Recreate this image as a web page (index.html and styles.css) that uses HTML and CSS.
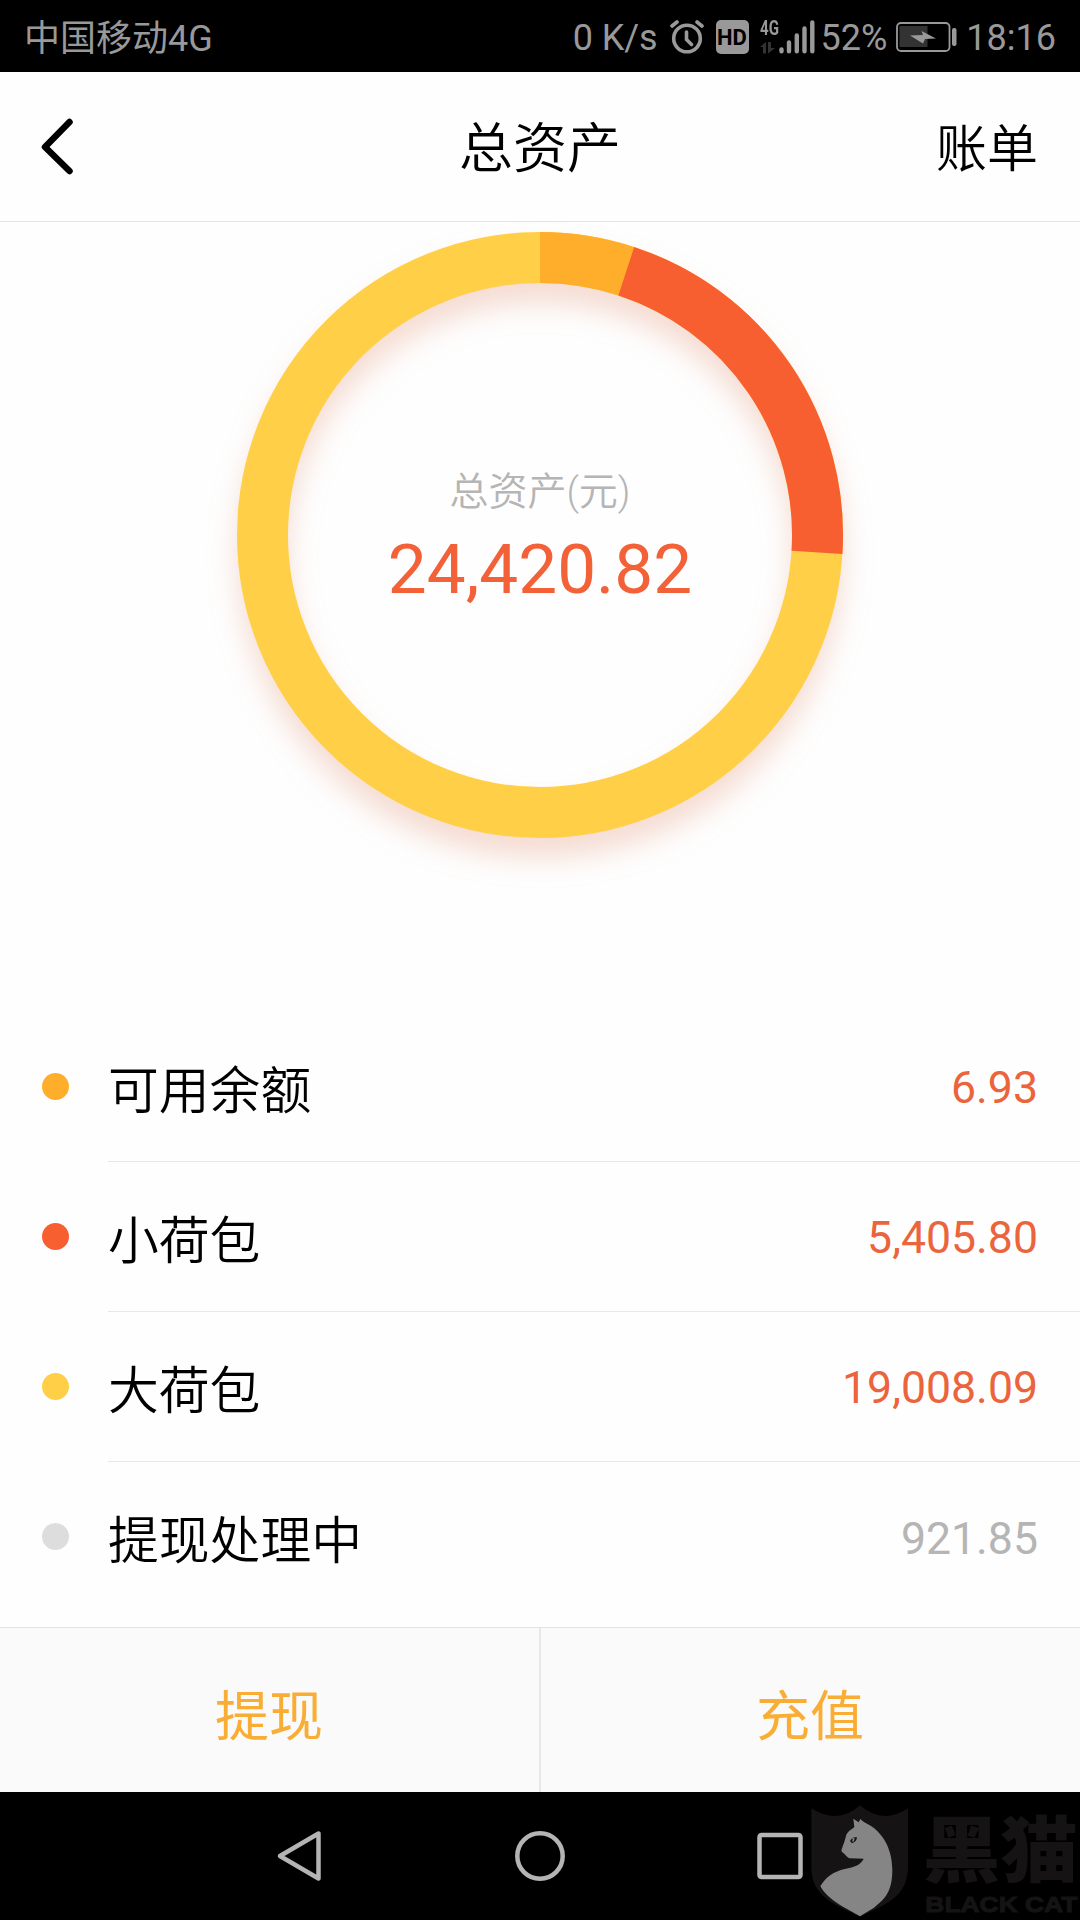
FILE: index.html
```html
<!DOCTYPE html>
<html lang="zh-CN">
<head>
<meta charset="utf-8">
<title>总资产</title>
<link rel="stylesheet" href="styles.css">
</head>
<body>
<div class="screen">
  <div class="status">
    <span class="carrier">中国移动4G</span>
    <span class="speed">0 K/s</span>
    <svg class="alarm" width="34" height="34" viewBox="0 0 34 34" fill="none" stroke="#999" stroke-linecap="round">
      <circle cx="17" cy="18.500" r="13.300" stroke-width="3.600"/>
      <path d="M2 6L7 2M32 6L27 2" stroke-width="3.600"/>
      <path d="M16.500 12v7.500l5 5" stroke-width="3.600"/>
    </svg>
    <span class="hd">HD</span>
    <span class="network">
      <span class="gen">4G</span>
      <svg width="16" height="12" viewBox="0 0 16 12">
        <path d="M0 5L6 0V11.500H3V5ZM8 0H11V6H15L8 11.500Z" fill="#333"/>
      </svg>
    </span>
    <svg class="signal" width="36" height="34" viewBox="0 0 36 34" stroke="#999" stroke-width="4.400" stroke-linecap="round">
      <path d="M2.500 29.500v1.700M10 22.500v8.700M17.800 15.500v15.700M25.500 8.500v22.700M33.300 2.500v28.700"/>
    </svg>
    <span class="percent">52%</span>
    <svg class="battery" width="62" height="30" viewBox="0 0 62 30">
      <rect x="1" y="1" width="52.500" height="28" rx="4" fill="none" stroke="#999" stroke-width="1.800"/>
      <rect x="3.500" y="4" width="28" height="21" fill="#333"/>
      <path d="M14 13.500L27 13L25.500 9L40 16.500L29 17L27 21.500Z" fill="#999"/>
      <rect x="56" y="6" width="4.500" height="18" rx="2" fill="#999"/>
    </svg>
    <span class="clock">18:16</span>
  </div>

  <header class="header">
    <svg class="back" width="34" height="60" viewBox="0 0 34 60" fill="none" stroke="#000" stroke-width="6.500" stroke-linecap="round" stroke-linejoin="round">
      <path d="M29.500 6L5 31L29.500 55"/>
    </svg>
    <h1 class="title">总资产</h1>
    <a class="bill">账单</a>
  </header>

  <section class="chart">
    <svg class="ring" width="606" height="606" viewBox="-303 -303 606 606" fill="none" stroke-width="51">
      <circle r="277.500" stroke="#ffd047"/>
      <path d="M0 -277.500A277.500 277.500 0 0 1 86.200 -263.800" stroke="#ffae2c"/>
      <path d="M86.200 -263.800A277.500 277.500 0 0 1 277 17.400" stroke="#f85f30"/>
    </svg>
    <div class="total">
      <div class="total-label">总资产(元)</div>
      <div class="total-value">24,420.82</div>
    </div>
  </section>

  <ul class="list">
    <li class="row"><i class="dot balance"></i><div class="cell"><span class="name">可用余额</span><b class="amount">6.93</b></div></li>
    <li class="row"><i class="dot small"></i><div class="cell"><span class="name">小荷包</span><b class="amount">5,405.80</b></div></li>
    <li class="row"><i class="dot large"></i><div class="cell"><span class="name">大荷包</span><b class="amount">19,008.09</b></div></li>
    <li class="row"><i class="dot pending"></i><div class="cell"><span class="name">提现处理中</span><b class="amount muted">921.85</b></div></li>
  </ul>

  <div class="actions">
    <a class="action">提现</a>
    <a class="action">充值</a>
  </div>

  <nav class="nav">
    <svg width="50" height="54" viewBox="0 0 50 54"><path d="M5 27L43.500 4.500V49.500Z"/></svg>
    <svg width="54" height="54" viewBox="0 0 54 54"><circle cx="27" cy="27" r="22.700"/></svg>
    <svg width="50" height="54" viewBox="0 0 50 54"><rect x="4.500" y="6" width="41" height="42" rx="2"/></svg>
  </nav>

  <svg class="watermark" width="290" height="130" viewBox="0 0 870 390">
    <path d="M64 55Q145 105 210 46Q278 105 354 55V232C354 320 285 345 210 380C135 345 64 320 64 232Z" fill="#151314"/>
    <path d="M190 86L206 97L211 87C219 95 226 99 238 105C285 133 307 185 307 240C307 310 280 330 252 353L210 379L167 355C135 337 105 315 91 289C107 260 132 245 164 237C194 231 213 224 221 206L178 205C171 202 166 193 156 186C152 178 158 174 158 169C163 158 166 145 169 134C176 121 187 117 193 111Z" fill="#858585"/>
    <path d="M180 153Q187 139 201 142Q200 155 186 160Z" fill="#151314"/>
    <path d="M188 144l6 1-3 10-4 0z" fill="#858585"/>
    <text class="mark-cn" x="398" y="257" textLength="466" lengthAdjust="spacingAndGlyphs">黑猫</text>
    <text class="mark-en" x="406" y="366" textLength="456" lengthAdjust="spacingAndGlyphs">BLACK CAT</text>
  </svg>
</div>
</body>
</html>
```
FILE: styles.css
```css
* { box-sizing: border-box; margin: 0; padding: 0; }

body {
  background: #fff;
  color: #000;
  font-family: Roboto, "Noto Sans CJK SC", sans-serif;
  font-weight: 400;
}

.screen {
  position: relative;
  display: flex;
  flex-direction: column;
  width: 1080px;
  height: 1920px;
  overflow: hidden;
  background: #fefefe;
}

.status {
  display: flex;
  align-items: center;
  height: 72px;
  padding: 2px 24px 0;
  background: #000;
  color: #999;
  font-size: 36px;
  line-height: 42px;
  white-space: nowrap;
}
.carrier { margin-right: auto; padding-top: 3px; }
.speed, .percent, .clock { padding-top: 2px; }
.speed { letter-spacing: -.1px; }
.alarm { margin-left: 12px; }
.hd {
  width: 33px;
  height: 34px;
  margin-left: 12px;
  border-radius: 5px;
  background: #999;
  color: #000;
  font-size: 22px;
  font-weight: 700;
  line-height: 35px;
  text-align: center;
}
.network {
  display: flex;
  flex-direction: column;
  justify-content: space-between;
  width: 19px;
  height: 34px;
  margin-left: 11px;
}
.gen {
  font-size: 21px;
  font-weight: 700;
  line-height: 16px;
  transform: scaleX(.72);
  transform-origin: left;
}
.percent { margin-left: 6px; }
.battery { margin-left: 9px; }
.clock { margin-left: 8px; }

.header {
  display: grid;
  grid-template-columns: 1fr auto 1fr;
  align-items: center;
  height: 150px;
  padding: 0 42px 2px 40px;
  border-bottom: 1px solid #e4e4e4;
}
.title { font-size: 54px; font-weight: 350; line-height: 64px; padding: 8px 0 0 2px; }
.bill { justify-self: end; font-size: 51px; font-weight: 350; line-height: 60px; padding-top: 8px; }

.chart {
  display: grid;
  justify-items: center;
  height: 790px;
  padding-top: 10px;
}
.ring {
  grid-area: 1 / 1;
  overflow: visible;
  filter: drop-shadow(0 20px 14px rgba(220, 125, 85, .26));
}
.total { grid-area: 1 / 1; padding-top: 234px; text-align: center; }
.total-label { color: #b5b5b5; font-size: 39px; font-weight: 350; line-height: 52px; }
.total-value { color: #f26138; font-size: 69.300px; line-height: 82px; margin-top: 11px; }

.list { list-style: none; height: 615px; }
.row {
  display: flex;
  align-items: center;
  height: 150px;
  padding-left: 41.500px;
}
.dot { width: 27px; height: 27px; margin-bottom: 2px; border-radius: 50%; }
.balance { background: #ffae2c; }
.small { background: #f85f30; }
.large { background: #ffd047; }
.pending { background: #ddd; }
.cell {
  flex: 1;
  display: flex;
  align-items: center;
  justify-content: space-between;
  height: 150px;
  margin-left: 39.500px;
  padding-right: 42px;
  border-bottom: 1px solid #e8e8e8;
  font-size: 50.800px;
}
.name { font-weight: 350; }
.row:last-child .cell { border-bottom: 0; }
.amount { padding-top: 3px; color: #eb643c; font-size: 44.600px; font-weight: 400; }
.muted { color: #b5b5b5; }

.actions {
  display: flex;
  height: 165px;
  border-top: 1px solid #e4e4e4;
  background: #fafafa;
}
.action {
  flex: 1;
  display: flex;
  align-items: center;
  justify-content: center;
  padding: 5px 1px 0 0;
  color: #f9ad35;
  font-size: 54px;
}
.action + .action { border-left: 2px solid #e8e8e8; }

.nav {
  display: flex;
  align-items: center;
  justify-content: space-between;
  height: 128px;
  padding: 0 275px;
  background: #000;
}
.nav svg { fill: none; stroke: #b4b4b4; stroke-width: 4.5; stroke-linejoin: round; }

.watermark { position: absolute; right: 0; bottom: 0; }
.mark-cn { fill: #151314; font: 900 214px "Noto Sans CJK SC", sans-serif; }
.mark-en { fill: #151314; stroke: #151314; stroke-width: 3px; font: 700 68px "Liberation Sans", sans-serif; }
```
